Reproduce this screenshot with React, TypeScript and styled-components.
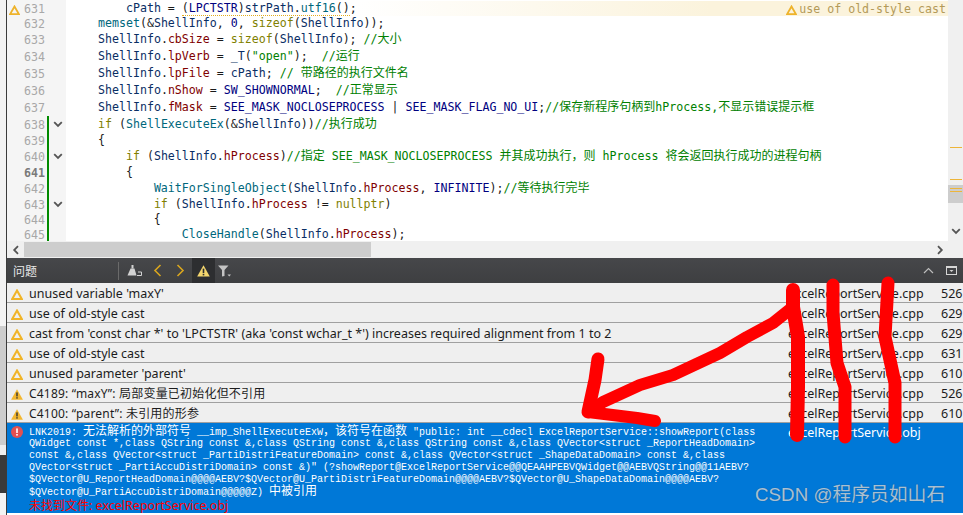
import React from "react";
import styled, { createGlobalStyle } from "styled-components";

const mono = `"DejaVu Sans Mono", "Noto Sans CJK SC", monospace`;
const ui = `"Noto Sans", "Noto Sans CJK SC", sans-serif`;

const Global = createGlobalStyle`
  html, body { margin: 0; padding: 0; background: #fff; overflow: hidden; }
`;

const Page = styled.div`
  position: relative;
  display: flex;
  width: 963px;
  height: 515px;
  overflow: hidden;
`;

const Strip = styled.div`
  display: flex;
  flex-direction: column;
  width: 6px;
  flex: none;
`;

const StripPart = styled.div<{ $h: number; $c: string }>`
  height: ${(p) => p.$h}px;
  background: ${(p) => p.$c};
`;

const Main = styled.div`
  display: flex;
  flex-direction: column;
  flex: 1;
  min-width: 0;
  border-left: 1px solid #3b3b3b;
`;

const Editor = styled.div`
  display: flex;
  height: 241px;
  flex: none;
  overflow: hidden;
`;

const Lines = styled.div`
  flex: 1;
  min-width: 0;
  padding-top: 1px;
  background: linear-gradient(to right, #f5f5f5 59px, #fff 59px);
`;

const Row = styled.div<{ $tall?: boolean }>`
  display: flex;
  height: ${(p) => (p.$tall ? 17 : 15)}px;
  line-height: ${(p) => (p.$tall ? 15 : 13)}px;
  font-family: ${mono};
  font-size: 11.62px;
`;

const LineNo = styled.div<{ $current?: boolean }>`
  display: flex;
  align-items: center;
  justify-content: space-between;
  width: 36px;
  padding: 2px 0 0 2px;
  box-sizing: content-box;
  flex: none;
  color: ${(p) => (p.$current ? "#7a7a7a" : "#a8a8a8")};
  font-weight: ${(p) => (p.$current ? 700 : 400)};
`;

const ChangeBar = styled.div<{ $on?: boolean }>`
  width: 2px;
  margin-left: 2px;
  flex: none;
  background: ${(p) => (p.$on ? "#008a00" : "transparent")};
`;

const Fold = styled.div`
  display: flex;
  align-items: center;
  justify-content: flex-start;
  width: 17px;
  padding-left: 4px;
  box-sizing: border-box;
  flex: none;
`;

const Code = styled.pre`
  margin: 0 0 0 4px;
  padding-top: 1px;
  font: inherit;
  line-height: inherit;
  white-space: pre;
`;

const colours: Record<string, string> = {
  t: "#1a1a1a",
  k: "#808000",
  f: "#00677c",
  v: "#092e64",
  m: "#800000",
  d: "#000080",
  s: "#008000",
  c: "#008000",
};

const Token = styled.span<{ $k: string }>`
  color: ${(p) => colours[p.$k]};
`;

const Cjk = styled.span`
  font-size: 12px;
  color: #008000;
`;

const Squiggle = styled.span`
  border-bottom: 1px dotted #e3ad1c;
`;

const Annotation = styled.div`
  flex: 1;
  display: flex;
  align-items: center;
  justify-content: flex-end;
  gap: 2px;
  padding: 2px 2px 0 0;
  color: #b39a58;
  background: linear-gradient(to right, rgba(251, 243, 220, 0), #fbf3dc 60%);
`;

const VScroll = styled.div`
  position: relative;
  width: 15px;
  flex: none;
  background: #f0f0f0;
`;

const VThumb = styled.div`
  position: absolute;
  left: 0;
  right: 0;
  top: 185px;
  height: 18px;
  background: #cdcdcd;
`;

const Marker = styled.div<{ $y: number }>`
  position: absolute;
  left: 2px;
  right: 1px;
  top: ${(p) => p.$y}px;
  height: 1px;
  background: #edb53a;
`;

const VArrow = styled.div`
  position: absolute;
  left: 3px;
  top: 228px;
  display: flex;
`;

const HScroll = styled.div`
  display: flex;
  align-items: center;
  height: 17px;
  flex: none;
  background: #f0f0f0;
`;

const HArrow = styled.div`
  display: flex;
  justify-content: center;
  width: 17px;
  flex: none;
`;

const HThumb = styled.div`
  width: 347px;
  height: 15px;
  background: #cdcdcd;
  flex: none;
`;

const HSpacer = styled.div`
  flex: 1;
`;

const HArrowEnd = styled(HArrow)`
  margin-right: 15px;
`;

const Toolbar = styled.div`
  display: flex;
  align-items: stretch;
  height: 25px;
  flex: none;
  background: linear-gradient(#46474a, #3e3f41);
  color: #e8e8e8;
`;

const Title = styled.div`
  display: flex;
  align-items: center;
  width: 105px;
  padding-left: 6px;
  font: 12px "Noto Sans CJK SC", sans-serif;
  flex: none;
`;

const Divider = styled.div`
  width: 1px;
  margin: 4px 0 3px;
  background: #6a6a6a;
  flex: none;
`;

const ToolBtn = styled.div<{ $w: number; $active?: boolean }>`
  display: flex;
  align-items: center;
  justify-content: center;
  width: ${(p) => p.$w}px;
  flex: none;
  background: ${(p) => (p.$active ? "#2d2e30" : "transparent")};
`;

const FirstNavBtn = styled(ToolBtn)`
  margin-left: -3.5px;
`;

const Grow = styled.div`
  flex: 1;
`;

const Issue = styled.div`
  display: grid;
  grid-template-columns: 22px 759px 153px 22px;
  align-items: center;
  height: 20px;
  padding-top: 3px;
  box-sizing: border-box;
  border-bottom: 1px solid #a0a0a0;
  background: #efefef;
  color: #1c1c1c;
  font: 12.5px/16px ${ui};
  flex: none;
`;

const IconCell = styled.div`
  display: flex;
  padding-left: 4px;
`;

const Message = styled.div<{ $compiler?: boolean }>`
  white-space: pre;
  overflow: hidden;
  font-size: ${(p) => (p.$compiler ? "12px" : "12.5px")};
  letter-spacing: ${(p) => (p.$compiler ? "0.2px" : "0")};
`;

const FileCell = styled.div`
  white-space: pre;
`;

const LineCell = styled.div`
  white-space: pre;
`;

const ErrorBlock = styled.div`
  display: grid;
  grid-template-columns: 22px 759px 153px 22px;
  height: 90px;
  background: #0078d7;
  color: #fff;
  font: 12.5px/20px ${ui};
  flex: none;
`;

const ErrorIcon = styled(IconCell)`
  padding-top: 3px;
  align-self: start;
`;

const ErrorText = styled.div`
  padding-top: 3px;
  overflow: hidden;
`;

const ErrorLine = styled.div`
  height: 12px;
  font-family: "Liberation Mono", "Noto Sans CJK SC", monospace;
  font-size: 10px;
  line-height: 12px;
  white-space: pre;
`;

const ErrorCjk = styled.span`
  font-size: 12px;
`;

const NotFound = styled.div`
  margin-top: 1px;
  color: #f00;
  font: 12.5px/14px ${ui};
  white-space: pre;
`;

const BottomEdge = styled.div`
  flex: 1;
  background: #fff;
`;

const Scribble = styled.svg`
  position: absolute;
  left: 0;
  top: 0;
  pointer-events: none;
`;

const Watermark = styled.div`
  position: absolute;
  left: 755px;
  top: 483px;
  color: rgba(212, 220, 227, 0.78);
  text-shadow: 0 0 1px rgba(60, 60, 60, 0.5);
  font: 18.8px/24px "Liberation Sans", "Noto Sans CJK SC", sans-serif;
  white-space: pre;
`;

const Tri = () => (
  <svg width="12" height="11" viewBox="0 0 12 11">
    <path d="M6 1.6 L10.8 10 H1.2 Z" fill="none" stroke="#f0b429" strokeWidth="2.1" strokeLinejoin="miter" />
  </svg>
);

const TriFilled = () => (
  <svg width="12" height="11" viewBox="0 0 12 11">
    <path d="M6 0.3 L11.9 10.8 H0.1 Z" fill="#f3b730" />
    <rect x="5.3" y="3.4" width="1.4" height="4" fill="#333" />
    <rect x="5.3" y="8.2" width="1.4" height="1.4" fill="#333" />
  </svg>
);

const GutterTri = () => (
  <svg width="11" height="10" viewBox="0 0 12 11">
    <path d="M6 1.6 L10.8 10 H1.2 Z" fill="none" stroke="#eeb32b" strokeWidth="2" />
  </svg>
);

const Chevron = () => (
  <svg width="10" height="7" viewBox="0 0 10 7">
    <path d="M1.2 1.2 L5 5 L8.8 1.2" fill="none" stroke="#555" strokeWidth="1.8" />
  </svg>
);

type T = [string, string];

const lines: { n: number; tall?: boolean; bar?: boolean; fold?: boolean; cur?: boolean; code: T[] }[] = [
  { n: 632, code: [["t", "    "], ["f", "memset"], ["t", "(&"], ["v", "ShellInfo"], ["t", ", "], ["d", "0"], ["t", ", "], ["k", "sizeof"], ["t", "("], ["v", "ShellInfo"], ["t", "));"]] },
  { n: 633, tall: true, code: [["t", "    "], ["v", "ShellInfo"], ["t", "."], ["m", "cbSize"], ["t", " = "], ["k", "sizeof"], ["t", "("], ["v", "ShellInfo"], ["t", "); "], ["c", "//"], ["j", "大小"]] },
  { n: 634, tall: true, code: [["t", "    "], ["v", "ShellInfo"], ["t", "."], ["m", "lpVerb"], ["t", " = "], ["v", "_T"], ["t", "("], ["s", "\"open\""], ["t", ");  "], ["c", "//"], ["j", "运行"]] },
  { n: 635, tall: true, code: [["t", "    "], ["v", "ShellInfo"], ["t", "."], ["m", "lpFile"], ["t", " = "], ["v", "cPath"], ["t", "; "], ["c", "// "], ["j", "带路径的执行文件名"]] },
  { n: 636, tall: true, code: [["t", "    "], ["v", "ShellInfo"], ["t", "."], ["m", "nShow"], ["t", " = "], ["d", "SW_SHOWNORMAL"], ["t", ";  "], ["c", "//"], ["j", "正常显示"]] },
  { n: 637, tall: true, code: [["t", "    "], ["v", "ShellInfo"], ["t", "."], ["m", "fMask"], ["t", " = "], ["d", "SEE_MASK_NOCLOSEPROCESS"], ["t", " | "], ["d", "SEE_MASK_FLAG_NO_UI"], ["t", ";"], ["c", "//"], ["j", "保存新程序句柄到"], ["c", "hProcess,"], ["j", "不显示错误提示框"]] },
  { n: 638, tall: true, bar: true, fold: true, code: [["t", "    "], ["k", "if"], ["t", " ("], ["f", "ShellExecuteEx"], ["t", "(&"], ["v", "ShellInfo"], ["t", "))"], ["c", "//"], ["j", "执行成功"]] },
  { n: 639, bar: true, code: [["t", "    {"]] },
  { n: 640, tall: true, bar: true, fold: true, code: [["t", "        "], ["k", "if"], ["t", " ("], ["v", "ShellInfo"], ["t", "."], ["m", "hProcess"], ["t", ")"], ["c", "//"], ["j", "指定"], ["c", " SEE_MASK_NOCLOSEPROCESS "], ["j", "并其成功执行，则"], ["c", " hProcess "], ["j", "将会返回执行成功的进程句柄"]] },
  { n: 641, bar: true, cur: true, code: [["t", "        {"]] },
  { n: 642, tall: true, bar: true, code: [["t", "            "], ["f", "WaitForSingleObject"], ["t", "("], ["v", "ShellInfo"], ["t", "."], ["m", "hProcess"], ["t", ", "], ["d", "INFINITE"], ["t", ");"], ["c", "//"], ["j", "等待执行完毕"]] },
  { n: 643, bar: true, fold: true, code: [["t", "            "], ["k", "if"], ["t", " ("], ["v", "ShellInfo"], ["t", "."], ["m", "hProcess"], ["t", " != "], ["k", "nullptr"], ["t", ")"]] },
  { n: 644, bar: true, code: [["t", "            {"]] },
  { n: 645, bar: true, code: [["t", "                "], ["f", "CloseHandle"], ["t", "("], ["v", "ShellInfo"], ["t", "."], ["m", "hProcess"], ["t", ");"]] },
];

const renderTokens = (code: T[]) =>
  code.map(([k, text], i) =>
    k === "j" ? <Cjk key={i}>{text}</Cjk> : <Token key={i} $k={k}>{text}</Token>
  );

const issues: { msg: string; file: string; line: string; filled?: boolean }[] = [
  { msg: "unused variable 'maxY'", file: "excelReportService.cpp", line: "526" },
  { msg: "use of old-style cast", file: "excelReportService.cpp", line: "629" },
  { msg: "cast from 'const char *' to 'LPCTSTR' (aka 'const wchar_t *') increases required alignment from 1 to 2", file: "excelReportService.cpp", line: "629" },
  { msg: "use of old-style cast", file: "excelReportService.cpp", line: "631" },
  { msg: "unused parameter 'parent'", file: "excelReportService.cpp", line: "610" },
  { msg: "C4189: “maxY”: 局部变量已初始化但不引用", file: "excelReportService.cpp", line: "526", filled: true },
  { msg: "C4100: “parent”: 未引用的形参", file: "excelReportService.cpp", line: "610", filled: true },
];

export default function App() {
  return (
    <Page>
      <Global />
      <Strip>
        <StripPart $h={326} $c="#f3f3f3" />
        <StripPart $h={119} $c="#cdcdcd" />
        <StripPart $h={10} $c="#efefef" />
        <StripPart $h={38} $c="#3a3a3a" />
        <StripPart $h={22} $c="#f3f3f3" />
      </Strip>
      <Main>
        <Editor>
          <Lines>
            <Row>
              <LineNo>
                <GutterTri />
                631
              </LineNo>
              <ChangeBar />
              <Fold />
              <Code>
                <Token $k="t">{"        "}</Token>
                <Token $k="v">cPath</Token>
                <Token $k="t"> = </Token>
                <Squiggle>
                  <Token $k="t">(</Token>
                  <Token $k="d">LPCTSTR</Token>
                  <Token $k="t">)</Token>
                  <Token $k="v">strPath</Token>
                  <Token $k="t">.</Token>
                  <Token $k="f">utf16</Token>
                  <Token $k="t">()</Token>
                </Squiggle>
                <Token $k="t">;</Token>
              </Code>
              <Annotation>
                <GutterTri />
                use of old-style cast
              </Annotation>
            </Row>
            {lines.map((l) => (
              <Row key={l.n} $tall={l.tall}>
                <LineNo $current={l.cur}>
                  <span />
                  {l.n}
                </LineNo>
                <ChangeBar $on={l.bar} />
                <Fold>{l.fold && <Chevron />}</Fold>
                <Code>{renderTokens(l.code)}</Code>
              </Row>
            ))}
          </Lines>
          <VScroll>
            <Marker $y={147} />
            <Marker $y={179} />
            <VThumb />
            <Marker $y={188} />
            <Marker $y={191} />
            <VArrow>
              <Chevron />
            </VArrow>
          </VScroll>
        </Editor>
        <HScroll>
          <HArrow>
            <svg width="8" height="10" viewBox="0 0 8 10">
              <path d="M6 1.2 L2.2 5 L6 8.8" fill="none" stroke="#555" strokeWidth="1.8" />
            </svg>
          </HArrow>
          <HThumb />
          <HSpacer />
          <HArrowEnd>
            <svg width="8" height="10" viewBox="0 0 8 10">
              <path d="M2 1.2 L5.8 5 L2 8.8" fill="none" stroke="#555" strokeWidth="1.8" />
            </svg>
          </HArrowEnd>
        </HScroll>
        <Toolbar>
          <Title>问题</Title>
          <Divider />
          <ToolBtn $w={30}>
            <svg width="15" height="11" viewBox="0 0 15 11">
              <rect x="4.5" y="0" width="2" height="3.5" fill="#d2d2d2" />
              <path d="M3.5 3.5 H7.5 L9.5 10.5 H0.5 Z" fill="#d2d2d2" />
              <path d="M11 7 H14.5 V10.5 H10" fill="none" stroke="#d2d2d2" strokeWidth="1" />
            </svg>
          </ToolBtn>
          <FirstNavBtn $w={23}>
            <svg width="9" height="13" viewBox="0 0 9 13">
              <path d="M7.5 1 L2 6.5 L7.5 12" fill="none" stroke="#d9a61e" strokeWidth="1.6" />
            </svg>
          </FirstNavBtn>
          <ToolBtn $w={23}>
            <svg width="9" height="13" viewBox="0 0 9 13">
              <path d="M1.5 1 L7 6.5 L1.5 12" fill="none" stroke="#d9a61e" strokeWidth="1.6" />
            </svg>
          </ToolBtn>
          <ToolBtn $w={23} $active>
            <svg width="13" height="12" viewBox="0 0 13 12">
              <path d="M6.5 0.3 L12.8 11.6 H0.2 Z" fill="#f5d76e" />
              <rect x="5.7" y="3.6" width="1.6" height="4.4" fill="#2d2e30" />
              <rect x="5.7" y="8.8" width="1.6" height="1.6" fill="#2d2e30" />
            </svg>
          </ToolBtn>
          <ToolBtn $w={20}>
            <svg width="14" height="12" viewBox="0 0 14 12">
              <path d="M0 0.5 H10.5 L6.5 5 V11 L4 11.5 V5 Z" fill="#c4c4c4" />
              <path d="M9.5 9.5 H13 L11.25 11.5 Z" fill="#c4c4c4" />
            </svg>
          </ToolBtn>
          <Grow />
          <ToolBtn $w={24}>
            <svg width="11" height="7" viewBox="0 0 11 7">
              <path d="M1 6 L5.5 1.5 L10 6" fill="none" stroke="#bdbdbd" strokeWidth="1.2" />
            </svg>
          </ToolBtn>
          <ToolBtn $w={23}>
            <svg width="11" height="9" viewBox="0 0 11 9">
              <rect x="0.5" y="0.5" width="10" height="8" fill="none" stroke="#d6d6d6" strokeWidth="1" />
              <path d="M0.5 1.5 H10.5" stroke="#d6d6d6" strokeWidth="1" />
              <path d="M3.5 4 H7.5 L5.5 6 Z" fill="#d6d6d6" />
            </svg>
          </ToolBtn>
        </Toolbar>
        {issues.map((it, i) => (
          <Issue key={i}>
            <IconCell>{it.filled ? <TriFilled /> : <Tri />}</IconCell>
            <Message $compiler={it.filled}>{it.msg}</Message>
            <FileCell>{it.file}</FileCell>
            <LineCell>{it.line}</LineCell>
          </Issue>
        ))}
        <ErrorBlock>
          <ErrorIcon>
            <svg width="12" height="12" viewBox="0 0 12 12">
              <circle cx="6" cy="6" r="6" fill="#e25050" />
              <rect x="5.2" y="2.4" width="1.6" height="4.6" fill="#fff" />
              <rect x="5.2" y="8" width="1.6" height="1.6" fill="#fff" />
            </svg>
          </ErrorIcon>
          <ErrorText>
            <ErrorLine>
              LNK2019: <ErrorCjk>无法解析的外部符号</ErrorCjk> __imp_ShellExecuteExW<ErrorCjk>，该符号在函数</ErrorCjk> "public: int __cdecl ExcelReportService::showReport(class
            </ErrorLine>
            <ErrorLine>QWidget const *,class QString const &amp;,class QString const &amp;,class QString const &amp;,class QVector&lt;struct _ReportHeadDomain&gt;</ErrorLine>
            <ErrorLine>const &amp;,class QVector&lt;struct _PartiDistriFeatureDomain&gt; const &amp;,class QVector&lt;struct _ShapeDataDomain&gt; const &amp;,class</ErrorLine>
            <ErrorLine>QVector&lt;struct _PartiAccuDistriDomain&gt; const &amp;)" (?showReport@ExcelReportService@@QEAAHPEBVQWidget@@AEBVQString@@11AEBV?</ErrorLine>
            <ErrorLine>$QVector@U_ReportHeadDomain@@@@AEBV?$QVector@U_PartiDistriFeatureDomain@@@@AEBV?$QVector@U_ShapeDataDomain@@@@AEBV?</ErrorLine>
            <ErrorLine>
              $QVector@U_PartiAccuDistriDomain@@@@@Z) <ErrorCjk>中被引用</ErrorCjk>
            </ErrorLine>
            <NotFound>
              <ErrorCjk>未找到文件</ErrorCjk>: excelReportService.obj
            </NotFound>
          </ErrorText>
          <FileCell>excelReportService.obj</FileCell>
          <LineCell />
        </ErrorBlock>
        <BottomEdge />
      </Main>
      <Scribble width="963" height="515" viewBox="0 0 963 515">
        <g fill="none" stroke="#ff0000" strokeLinecap="round" strokeLinejoin="round">
          <path strokeWidth="12" d="M793 307 L773 323 L747 337 L720 353 L673 375 L640 385 L603 402 L588 412 L637 418 L655 421" />
          <path strokeWidth="13" d="M598 359 L595 380 L588 412" />
          <path strokeWidth="14" d="M793 290 L793 307 L798 337 L798 387 L797 435" />
          <path strokeWidth="13" d="M833 285 L833 313 L837 363 L845 387 L845 437" />
          <path strokeWidth="13" d="M888 283 L885 337 L895 383 L895 437" />
        </g>
      </Scribble>
      <Watermark>CSDN @程序员如山石</Watermark>
    </Page>
  );
}
